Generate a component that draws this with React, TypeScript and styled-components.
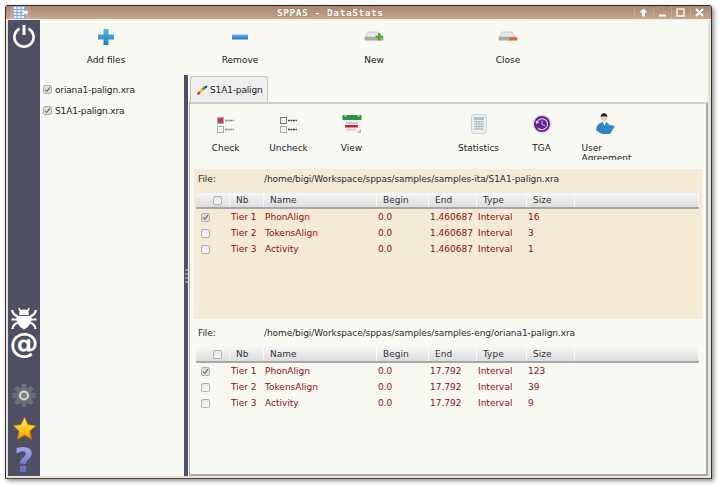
import React from "react";
import styled, { createGlobalStyle } from "styled-components";

const Global = createGlobalStyle`
  html, body { margin: 0; padding: 0; background: #fff; }
  body { font-family: "DejaVu Sans", Verdana, sans-serif; font-size: 9px; }
`;

const Page = styled.div`
  width: 720px;
  height: 487px;
  padding: 5px 0 0 5px;
  box-sizing: border-box;
  overflow: hidden;
`;
const Win = styled.div`
  width: 707px;
  height: 474px;
  box-sizing: border-box;
  display: flex;
  flex-direction: column;
  border: 1px solid #3c3029;
  border-top-color: #2e2620;
  border-bottom-color: #5a4436;
  border-radius: 3px 3px 0 0;
  background: #e4e3df;
  box-shadow: 2px 2px 4px rgba(0, 0, 0, 0.45);
`;
const TitleBar = styled.div`
  height: 13px;
  flex: none;
  display: flex;
  align-items: center;
  background: linear-gradient(#a5846a, #c6a78e);
  border-bottom: 1px solid #f4efe6;
`;
const TitleIcon = styled.div`
  width: 21px;
  height: 13px;
  margin-left: 4px;
  display: flex;
  align-items: center;
  justify-content: center;
  background: rgba(255, 255, 255, 0.12);
`;
const Title = styled.div`
  margin-left: 246px;
  width: 358px;
  font-family: "DejaVu Sans Mono", monospace;
  font-weight: 700;
  font-size: 9.5px;
  letter-spacing: 0.55px;
  color: #fff;
  text-shadow: 0 0 1px #7d6350;
`;
const WinButtons = styled.div`
  display: flex;
  margin-left: auto;
  margin-right: 3px;
`;
const WinButton = styled.div`
  width: 18.5px;
  height: 13px;
  display: flex;
  align-items: center;
  justify-content: center;
  border-left: 1px solid rgba(255, 255, 255, 0.18);
  box-sizing: border-box;
`;
const Frame = styled.div`
  flex: 1;
  display: flex;
  min-height: 0;
  padding: 0 3px 2px 2px;
`;
const Side = styled.div`
  width: 32px;
  flex: none;
  background: #4f4f64;
  display: flex;
  flex-direction: column;
  align-items: center;
`;
const SideIconTop = styled.div`
  height: 30px;
  display: flex;
  align-items: center;
  margin-top: 1px;
`;
const SideBottom = styled.div`
  margin-top: auto;
  display: flex;
  flex-direction: column;
  align-items: center;
`;
const SideSlot = styled.div<{ $h: number }>`
  height: ${(p) => p.$h}px;
  width: 32px;
  display: flex;
  justify-content: center;
  align-items: flex-start;
`;
const At = styled.div`
  font-family: "DejaVu Sans", sans-serif;
  font-weight: 700;
  font-size: 29px;
  line-height: 23px;
  height: 29px;
  color: #fff;
`;
const Help = styled.div`
  font-family: "DejaVu Sans", sans-serif;
  font-weight: 700;
  font-size: 34px;
  line-height: 27px;
  height: 29px;
  background: linear-gradient(#a8a8ea, #5e5ec4);
  -webkit-background-clip: text;
  background-clip: text;
  color: transparent;
`;
const Main = styled.div`
  flex: 1;
  min-width: 0;
  display: flex;
  flex-direction: column;
  background: #f9f9f4;
`;
const Tools = styled.div`
  height: 55px;
  flex: none;
  display: flex;
  margin-left: -1px;
`;
const Tool = styled.div`
  width: 134px;
  display: flex;
  flex-direction: column;
  align-items: center;
  color: #222;
`;
const ToolIcon = styled.div`
  height: 24px;
  margin-top: 5px;
  display: flex;
  align-items: center;
  justify-content: center;
`;
const ToolLabel = styled.div`
  margin-top: 6px;
  line-height: 11px;
`;
const Split = styled.div`
  flex: 1;
  min-height: 0;
  display: flex;
`;
const FileList = styled.div`
  width: 144px;
  flex: none;
  padding: 4px 0 0 3px;
  box-sizing: border-box;
`;
const FileRow = styled.div`
  height: 21px;
  display: flex;
  align-items: center;
  gap: 3px;
  color: #222;
  letter-spacing: -0.15px;
`;
const Sash = styled.div`
  width: 4px;
  flex: none;
  background: #4f4f64;
  display: flex;
  flex-direction: column;
  align-items: center;
  justify-content: center;
  gap: 2px;
`;
const SashDot = styled.div`
  width: 3px;
  height: 2px;
  background: #8c8c9c;
`;
const Notebook = styled.div`
  flex: 1;
  min-width: 0;
  padding-left: 1px;
  display: flex;
  flex-direction: column;
`;
const TabStrip = styled.div`
  height: 27px;
  flex: none;
  display: flex;
  padding: 1px 0 0 1px;
  box-sizing: border-box;
`;
const Tab = styled.div`
  width: 78px;
  box-sizing: border-box;
  display: flex;
  align-items: center;
  gap: 2px;
  padding-left: 5px;
  background: #eeeeee;
  border: 1px solid #c2c2c2;
  border-bottom: none;
  border-radius: 3px 3px 0 0;
  color: #222;
  letter-spacing: -0.15px;
`;
const Panel = styled.div`
  flex: 1;
  min-height: 0;
  border: 1px solid #a9a9a9;
  border-top: 2px solid #cfcfcf;
  border-right-width: 2px;
  border-bottom-width: 2px;
  padding: 0 4px;
  overflow: hidden;
`;
const InnerTools = styled.div`
  height: 65px;
  display: flex;
  overflow: hidden;
`;
const InnerTool = styled.div`
  width: 63px;
  flex: none;
  display: flex;
  flex-direction: column;
  align-items: center;
  color: #222;
`;
const Gap = styled.div`
  width: 64px;
  flex: none;
`;
const InnerIcon = styled.div`
  height: 24px;
  margin-top: 8px;
  display: flex;
  align-items: center;
  justify-content: center;
`;
const InnerLabel = styled.div<{ $wrap?: boolean }>`
  margin-top: 7px;
  line-height: 11px;
  ${(p) => (p.$wrap ? "width: 54px; margin-left: 8px; height: 17px; line-height: 10px; overflow: hidden;" : "")}
`;
const Section = styled.div<{ $active?: boolean; $h: number }>`
  height: ${(p) => p.$h}px;
  background: ${(p) => (p.$active ? "#f5ead6" : "transparent")};
  padding: 0 3px 0 2px;
  box-sizing: border-box;
`;
const PathRow = styled.div<{ $h: number; $pad: number }>`
  height: ${(p) => p.$h}px;
  display: flex;
  align-items: center;
  padding: 0 0 ${(p) => p.$pad}px 2px;
  box-sizing: border-box;
  color: #2b2b2b;
  letter-spacing: -0.08px;
`;
const PathLabel = styled.div`
  width: 66px;
  flex: none;
`;
const Cols = "34px 34px 113px 52px 48px 50px 48px 1fr";
const HeadRow = styled.div`
  display: grid;
  grid-template-columns: ${Cols};
  height: 16px;
  box-sizing: border-box;
  background: linear-gradient(#f7f7f7, #dcdcdc);
  border-bottom: 2px solid #a8a8a8;
  color: #333;
`;
const HeadCell = styled.div<{ $box?: boolean }>`
  display: flex;
  align-items: center;
  padding-left: ${(p) => (p.$box ? "17px" : "6px")};
  border-right: 1px solid rgba(255, 255, 255, 0.7);
`;
const Row = styled.div`
  display: grid;
  grid-template-columns: ${Cols};
  height: 16px;
  color: #8a0f0f;
`;
const Cell = styled.div<{ $box?: boolean }>`
  display: flex;
  align-items: center;
  padding-left: ${(p) => (p.$box ? "5px" : "1px")};
`;
const Box = styled.div<{ $on?: boolean }>`
  width: 9px;
  height: 9px;
  box-sizing: border-box;
  flex: none;
  border: 1px solid #b0b0b0;
  border-radius: 2px;
  background: ${(p) => (p.$on ? "#dedede" : "linear-gradient(#e6e6e6, #f9f9f9)")};
  display: flex;
  align-items: center;
  justify-content: center;
`;

const Tick = () => (
  <svg width="7" height="7" viewBox="0 0 7 7">
    <path d="M1 3.5 L2.8 5.5 L6 1.2" fill="none" stroke="#666" strokeWidth="1.1" />
  </svg>
);
const Check = ({ on }: { on?: boolean }) => <Box $on={on}>{on && <Tick />}</Box>;

const Power = () => (
  <svg width="24" height="24" viewBox="0 0 24 24">
    <path d="M7.6 4.6 A9.6 9.6 0 1 0 16.4 4.6" fill="none" stroke="#fff" strokeWidth="2.6" />
    <path d="M12 1 V11" stroke="#fff" strokeWidth="3" />
  </svg>
);
const Bug = () => (
  <svg width="26" height="23" viewBox="0 0 26 23">
    <path d="M8 1 Q8.5 3.5 10 4.5 M18 1 Q17.5 3.5 16 4.5" fill="none" stroke="#fff" strokeWidth="1.6" />
    <path d="M8 8 Q8 2.5 13 2.5 Q18 2.5 18 8 Z" fill="#fff" />
    <path d="M5.5 9 H20.5 Q21.5 18 13 22.5 Q4.5 18 5.5 9 Z" fill="#fff" />
    <path d="M1 3 Q2 8 7 9.5 M25 3 Q24 8 19 9.5 M0.5 12.5 H6.5 M25.5 12.5 H19.5 M1.5 22 Q2 17 7.5 15.5 M24.5 22 Q24 17 18.5 15.5" fill="none" stroke="#fff" strokeWidth="2.2" />
  </svg>
);
const Gear = () => {
  const teeth = [0, 45, 90, 135, 180, 225, 270, 315];
  return (
    <svg width="24" height="25" viewBox="0 0 24 24">
      {teeth.map((a) => (
        <rect key={a} x="9.6" y="0.5" width="4.8" height="5" fill="#6b7276" transform={`rotate(${a} 12 12)`} />
      ))}
      <circle cx="12" cy="12" r="8" fill="#6b7276" />
      <circle cx="12" cy="12" r="5" fill="#d8d8d0" />
      <circle cx="12" cy="12" r="3" fill="#7c8286" />
    </svg>
  );
};
const Star = () => (
  <svg width="25" height="25" viewBox="0 0 25 25">
    <defs>
      <linearGradient id="sg" x1="0" y1="0" x2="0" y2="1">
        <stop offset="0" stopColor="#fff07a" />
        <stop offset="0.6" stopColor="#fcc212" />
        <stop offset="1" stopColor="#e8940a" />
      </linearGradient>
    </defs>
    <polygon points="12.5,1 16,8.6 24,9.6 18,15.2 19.8,23.6 12.5,19.4 5.2,23.6 7,15.2 1,9.6 9,8.6" fill="url(#sg)" stroke="#a46a08" strokeWidth="0.8" strokeLinejoin="round" />
  </svg>
);
const Plus = () => (
  <svg width="16" height="16" viewBox="0 0 16 16">
    <defs>
      <linearGradient id="pg" x1="0" y1="0" x2="0" y2="1">
        <stop offset="0" stopColor="#5fb5e5" />
        <stop offset="1" stopColor="#1f7eb8" />
      </linearGradient>
    </defs>
    <path d="M5.5 0 H10.5 V5.5 H16 V10.5 H10.5 V16 H5.5 V10.5 H0 V5.5 H5.5 Z" fill="url(#pg)" />
  </svg>
);
const Minus = () => (
  <svg width="16" height="16" viewBox="0 0 16 16">
    <rect x="0" y="5.5" width="16" height="5" fill="url(#pg)" />
  </svg>
);
const Drive = ({ accent }: { accent: "new" | "close" }) => (
  <svg width="20" height="14" viewBox="0 0 20 14">
    <path d="M4 2 H14 L17 7 H1 Z" fill="#e6e6e6" stroke="#bbb" strokeWidth="0.6" />
    <rect x="0.5" y="7" width="19" height="3.5" rx="1" fill="#a9a9a4" />
    {accent === "close" ? (
      <rect x="11" y="7.3" width="8" height="3" fill="#e8662a" />
    ) : (
      <path d="M14 3 H16.5 V5.5 H19 V8 H16.5 V10.5 H14 V8 H11.5 V5.5 H14 Z" fill="#53a93f" />
    )}
  </svg>
);
const Checks = ({ first }: { first: boolean }) => (
  <svg width="18" height="20" viewBox="0 0 18 20">
    <rect x="0.5" y="3.5" width="6" height="6" fill={first ? "#cc3a50" : "#f4f4f4"} stroke={first ? "#b8a8a8" : "#777"} />
    <rect x="0.5" y="12.5" width="6" height="6" fill="#f4f4f4" stroke="#aaa" />
    <path d="M8 6.5 H17 M8 15.5 H17" stroke={first ? "#888" : "#444"} strokeWidth="1.6" strokeDasharray="2 0.5" />
  </svg>
);
const Calendar = () => (
  <svg width="20" height="20" viewBox="0 0 20 20">
    <rect x="1" y="1" width="18" height="18" fill="#f3f3f3" />
    <rect x="0.5" y="1" width="19" height="5" fill="#2e9440" />
    <circle cx="3.5" cy="1.5" r="1.2" fill="#c8c8c8" />
    <circle cx="16.5" cy="1.5" r="1.2" fill="#c8c8c8" />
    <rect x="4" y="8" width="12" height="2" fill="#d3c5d0" />
    <rect x="3" y="11" width="13" height="2.5" fill="#d01d3c" />
    <rect x="4" y="14.5" width="10" height="2" fill="#cfcfcf" />
    <path d="M15 19 L19 15 V19 Z" fill="#bbb" />
  </svg>
);
const Stats = () => (
  <svg width="16" height="20" viewBox="0 0 16 20">
    <rect x="0.5" y="0.5" width="15" height="19" rx="2.5" fill="#ededed" stroke="#d2d2d2" />
    <rect x="3" y="3" width="10" height="3" fill="#a8bfcf" />
    <path d="M3 7.5 H13 M3 10 H13 M3 12.5 H13 M3 15 H13 M5.5 7 V16 M8 7 V16 M10.5 7 V16" stroke="#a8bfcf" strokeWidth="1" />
  </svg>
);
const Tga = () => (
  <svg width="20" height="20" viewBox="0 0 20 20">
    <circle cx="10" cy="10" r="9.5" fill="#dcdcdc" />
    <circle cx="10" cy="10" r="8" fill="#68208c" />
    <path d="M5 8 A5.5 5.5 0 1 1 6 14" fill="none" stroke="#d9c6e2" strokeWidth="1.2" />
    <path d="M10 6.5 V10.5 L13 11.5" fill="none" stroke="#d9c6e2" strokeWidth="1" />
    <path d="M3.5 6.5 L7 8 L4.5 10.5 Z" fill="#d9c6e2" />
  </svg>
);
const User = () => (
  <svg width="20" height="22" viewBox="0 0 20 22">
    <ellipse cx="9" cy="4.5" rx="3.2" ry="4" fill="#e8cfbb" />
    <path d="M5.6 4 Q6 0.2 9 0.2 Q12 0.2 12.4 4 Q9 2.5 5.6 4 Z" fill="#222" />
    <path d="M1 17 Q1.5 10 8 9 L11 9 Q14 10 14 12 L20 13 L15 21 H8 Q4 20 1 17 Z" fill="#2f84c4" />
    <path d="M8 9 L9.5 13 L11 9 Z" fill="#fff" />
  </svg>
);
const Logo = () => (
  <svg width="12" height="10" viewBox="0 0 12 10">
    <path d="M0.5 9.5 L3 6 L5 8 L3 9.5 Z" fill="#e2231a" />
    <path d="M3 6 L5.5 3.5 L7.5 5.5 L5 8 Z" fill="#f5c518" />
    <path d="M5.5 3.5 L8 1.5 L9.5 3.5 L7.5 5.5 Z" fill="#1ea64a" />
    <path d="M8 1.5 L11.5 0.5 L11 2.5 L9.5 3.5 Z" fill="#1c3fc8" />
  </svg>
);
const AppMark = () => (
  <svg width="15" height="13" viewBox="0 0 15 13">
    <rect x="0.5" y="0.5" width="11" height="12" fill="#eaf2fa" stroke="#8fb2d4" />
    <path d="M0.5 3.5 H11.5 M0.5 6.5 H11.5 M0.5 9.5 H11.5 M4 0.5 V12.5 M8 0.5 V12.5" stroke="#7fa6cc" />
    <path d="M10 5 H13 V3.5 L15 6.5 L13 9 V7.5 H10 Z" fill="#fff" />
  </svg>
);

type Tier = { id: string; name: string; size: string; on?: boolean };
const Table = ({ end, tiers }: { end: string; tiers: Tier[] }) => (
  <>
    <HeadRow>
      <HeadCell $box><Check /></HeadCell>
      <HeadCell>Nb</HeadCell>
      <HeadCell>Name</HeadCell>
      <HeadCell>Begin</HeadCell>
      <HeadCell>End</HeadCell>
      <HeadCell>Type</HeadCell>
      <HeadCell>Size</HeadCell>
      <HeadCell />
    </HeadRow>
    {tiers.map((t) => (
      <Row key={t.id}>
        <Cell $box><Check on={t.on} /></Cell>
        <Cell>{t.id}</Cell>
        <Cell>{t.name}</Cell>
        <Cell>0.0</Cell>
        <Cell>{end}</Cell>
        <Cell>Interval</Cell>
        <Cell>{t.size}</Cell>
      </Row>
    ))}
  </>
);

export default function App() {
  return (
    <Page>
      <Global />
      <Win>
        <TitleBar>
          <TitleIcon><AppMark /></TitleIcon>
          <Title>SPPAS - DataStats</Title>
          <WinButtons>
            <WinButton>
              <svg width="9" height="9" viewBox="0 0 9 9"><path d="M4.5 0.5 L8.5 4.5 H6 V8.5 H3 V4.5 H0.5 Z" fill="#fff" /></svg>
            </WinButton>
            <WinButton>
              <svg width="9" height="9" viewBox="0 0 9 9"><rect x="1" y="6.5" width="7" height="2" fill="#fff" /></svg>
            </WinButton>
            <WinButton>
              <svg width="9" height="9" viewBox="0 0 9 9"><rect x="1" y="1" width="7" height="7" fill="none" stroke="#fff" strokeWidth="1.3" /></svg>
            </WinButton>
            <WinButton>
              <svg width="9" height="9" viewBox="0 0 9 9"><path d="M1 1 L8 8 M8 1 L1 8" stroke="#fff" strokeWidth="2" /></svg>
            </WinButton>
          </WinButtons>
        </TitleBar>
        <Frame>
          <Side>
            <SideIconTop><Power /></SideIconTop>
            <SideBottom>
              <SideSlot $h={25}><Bug /></SideSlot>
              <SideSlot $h={51}><At>@</At></SideSlot>
              <SideSlot $h={33}><Gear /></SideSlot>
              <SideSlot $h={31}><Star /></SideSlot>
              <SideSlot $h={29}><Help>?</Help></SideSlot>
            </SideBottom>
          </Side>
          <Main>
            <Tools>
              <Tool><ToolIcon><Plus /></ToolIcon><ToolLabel>Add files</ToolLabel></Tool>
              <Tool><ToolIcon><Minus /></ToolIcon><ToolLabel>Remove</ToolLabel></Tool>
              <Tool><ToolIcon><Drive accent="new" /></ToolIcon><ToolLabel>New</ToolLabel></Tool>
              <Tool><ToolIcon><Drive accent="close" /></ToolIcon><ToolLabel>Close</ToolLabel></Tool>
            </Tools>
            <Split>
              <FileList>
                <FileRow><Check on />oriana1-palign.xra</FileRow>
                <FileRow><Check on />S1A1-palign.xra</FileRow>
              </FileList>
              <Sash>
                <SashDot /><SashDot /><SashDot /><SashDot />
              </Sash>
              <Notebook>
                <TabStrip>
                  <Tab><Logo />S1A1-palign</Tab>
                </TabStrip>
                <Panel>
                  <InnerTools>
                    <InnerTool><InnerIcon><Checks first /></InnerIcon><InnerLabel>Check</InnerLabel></InnerTool>
                    <InnerTool><InnerIcon><Checks first={false} /></InnerIcon><InnerLabel>Uncheck</InnerLabel></InnerTool>
                    <InnerTool><InnerIcon><Calendar /></InnerIcon><InnerLabel>View</InnerLabel></InnerTool>
                    <Gap />
                    <InnerTool><InnerIcon><Stats /></InnerIcon><InnerLabel>Statistics</InnerLabel></InnerTool>
                    <InnerTool><InnerIcon><Tga /></InnerIcon><InnerLabel>TGA</InnerLabel></InnerTool>
                    <InnerTool><InnerIcon><User /></InnerIcon><InnerLabel $wrap>User Agreement</InnerLabel></InnerTool>
                  </InnerTools>
                  <Section $active $h={150}>
                    <PathRow $h={24} $pad={4}>
                      <PathLabel>File:</PathLabel>
                      /home/bigi/Workspace/sppas/samples/samples-ita/S1A1-palign.xra
                    </PathRow>
                    <Table
                      end="1.460687"
                      tiers={[
                        { id: "Tier 1", name: "PhonAlign", size: "16", on: true },
                        { id: "Tier 2", name: "TokensAlign", size: "3" },
                        { id: "Tier 3", name: "Activity", size: "1" },
                      ]}
                    />
                  </Section>
                  <Section $h={110}>
                    <PathRow $h={28} $pad={1}>
                      <PathLabel>File:</PathLabel>
                      /home/bigi/Workspace/sppas/samples/samples-eng/oriana1-palign.xra
                    </PathRow>
                    <Table
                      end="17.792"
                      tiers={[
                        { id: "Tier 1", name: "PhonAlign", size: "123", on: true },
                        { id: "Tier 2", name: "TokensAlign", size: "39" },
                        { id: "Tier 3", name: "Activity", size: "9" },
                      ]}
                    />
                  </Section>
                </Panel>
              </Notebook>
            </Split>
          </Main>
        </Frame>
      </Win>
    </Page>
  );
}
